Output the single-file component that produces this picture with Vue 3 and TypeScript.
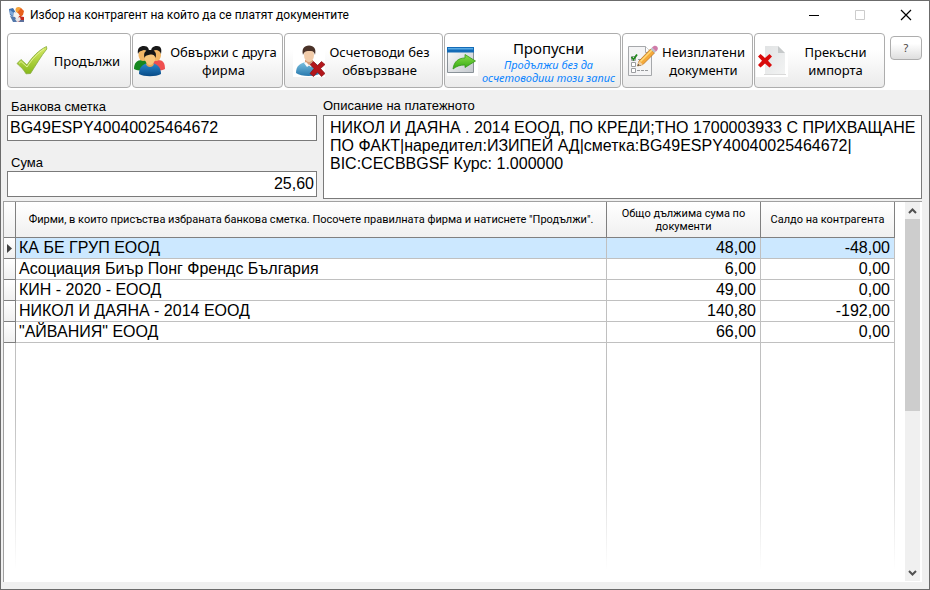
<script setup lang="ts">
import { ref } from 'vue'

interface Firm {
  name: string
  due: string
  balance: string
}

const account = ref('BG49ESPY40040025464672')
const amount = ref('25,60')
const description = ref(
  'НИКОЛ И ДАЯНА . 2014 ЕООД, ПО КРЕДИ;ТНО 1700003933 С ПРИХВАЩАНЕ ПО ФАКТ|наредител:ИЗИПЕЙ АД|сметка:BG49ESPY40040025464672|\nBIC:CECBBGSF Курс: 1.000000',
)
const selected = ref(0)

const firms: Firm[] = [
  { name: 'КА БЕ ГРУП ЕООД', due: '48,00', balance: '-48,00' },
  { name: 'Асоциация Биър Понг Френдс България', due: '6,00', balance: '0,00' },
  { name: 'КИН - 2020 - ЕООД', due: '49,00', balance: '0,00' },
  { name: 'НИКОЛ И ДАЯНА - 2014 ЕООД', due: '140,80', balance: '-192,00' },
  { name: '"АЙВАНИЯ" ЕООД', due: '66,00', balance: '0,00' },
]
</script>

<template>
  <main class="window">
    <header class="titlebar">
      <svg class="app-icon" viewBox="0 0 16 16" aria-hidden="true">
        <path d="M0 2 4 1l3 5-1 5-5-3z" fill="#3d6fae" />
        <path d="M1 3l4 3-1 3-3-2z" fill="#7da7d8" />
        <circle cx="9.500" cy="3" r="3" fill="#f4a23a" />
        <path d="M8 6 12 1l3 3-1 4-4 3z" fill="#e8601c" />
        <path d="M5 5l4 1 2 3-3 4-4-3z" fill="#f5f1ee" />
        <path d="M1 9l5 1 3 5H4z" fill="#5378ab" />
        <path d="M10 9l5 1v5H8z" fill="#c5281f" />
        <path d="M6 12l5-2 1 4-4 1z" fill="#e7e3e5" />
        <path d="M11 13h4v2h-5z" fill="#5d6f9b" />
      </svg>
      <h1 class="title">Избор на контрагент на който да се платят документите</h1>
      <div class="caption-buttons">
        <button class="caption" type="button" aria-label="Минимизирай">
          <svg viewBox="0 0 12 12"><path d="M1 6.500h10" stroke="#000" /></svg>
        </button>
        <button class="caption" type="button" aria-label="Максимизирай" disabled>
          <svg viewBox="0 0 12 12"><path d="M1.500 1.500h9v9h-9z" fill="none" stroke="#ccc" /></svg>
        </button>
        <button class="caption" type="button" aria-label="Затвори">
          <svg viewBox="0 0 12 12"><path d="M1 1l10 10M11 1 1 11" stroke="#000" stroke-width="1.200" /></svg>
        </button>
      </div>
    </header>

    <nav class="toolbar">
      <button class="tool tool-continue" type="button">
        <svg class="tool-icon" viewBox="0 0 32 32" aria-hidden="true">
          <defs>
            <linearGradient id="tick" x1="0" y1="0" x2="0" y2="1">
              <stop offset="0" stop-color="#d9ec66" />
              <stop offset="1" stop-color="#86b81a" />
            </linearGradient>
          </defs>
          <path d="M1 18.500 5 14.500l6 5.500C16 12 23 5 30.500 1.500l.3 2.500C25 11 20 20 14.500 28.500l-4.500.3C8 25 5 22 1 18.500z" fill="url(#tick)" stroke="#86a93c" stroke-width=".8" stroke-linejoin="round" />
          <path d="M3 18.400 5 16.500l6 5.500C16 14 22 8 28 4" fill="none" stroke="#e7f4a0" stroke-width=".9" />
        </svg>
        <span class="tool-text">Продължи</span>
      </button>

      <button class="tool tool-link" type="button">
        <svg class="tool-icon" viewBox="0 0 32 32" aria-hidden="true">
          <defs>
            <linearGradient id="blue-body" x1="0" y1="0" x2="0" y2="1">
              <stop offset="0" stop-color="#2a8ad0" />
              <stop offset="1" stop-color="#084a86" />
            </linearGradient>
          </defs>
          <path d="M0 24c0-6 3-9 8-9s8 3 8 9c-4 2-12 2-16 0z" fill="#16871f" />
          <path d="M16 24c0-6 3-9 8-9s7 3 7 9c-4 2-11 2-15 0z" fill="#ef4f4f" />
          <ellipse cx="9" cy="10" rx="4.500" ry="6" fill="#f3b765" />
          <ellipse cx="22.500" cy="10" rx="4.500" ry="6" fill="#f3b765" />
          <path d="M4 9C3 3 6 1 10 1s6 3 4.500 8C14 7 12 5 10 5 7 6 5 6 4 9z" fill="#191919" />
          <path d="M17.500 9C16 3 19 1 23 1s5 3 4 8c-1-3-3-4-5-4s-4 2-4.500 4z" fill="#191919" />
          <path d="M5 29c0-7 4-11 11-11s11 4 11 11c-5 3-17 3-22 0z" fill="url(#blue-body)" />
          <path d="M12 19c1 4 7 4 8 0l-2-2h-4z" fill="#e9a655" />
          <ellipse cx="16" cy="13.500" rx="5" ry="6.500" fill="#f9c77c" />
          <path d="M10.500 13C9 7 12 5 16.500 5S23 8 21.500 13c-.5-3-3-4-5-3.500-3 1-5 .5-6 3.500z" fill="#151515" />
        </svg>
        <span class="tool-text">Обвържи с друга фирма</span>
      </button>

      <button class="tool tool-account" type="button">
        <svg class="tool-icon" viewBox="0 0 32 32" aria-hidden="true">
          <defs>
            <linearGradient id="shirt" x1="0" y1="0" x2="0" y2="1">
              <stop offset="0" stop-color="#7cc1df" />
              <stop offset="1" stop-color="#2879ae" />
            </linearGradient>
          </defs>
          <path d="M0 2h32v30H0z" fill="#fff" />
          <path d="M3 28c0-7 4-11 13-11 8 0 12 4 12 11-5 4-20 4-25 0z" fill="url(#shirt)" />
          <path d="M12 15h8v3c-1 4-7 4-8 0z" fill="#d99c74" />
          <path d="M11 18l2-1 3 3 3-3 2 1-3 4-2-1.500-2 1.500z" fill="#f7fbfd" />
          <ellipse cx="16" cy="10" rx="5" ry="7" fill="#f1cba9" />
          <path d="M10 10C8.500 4 11 .5 16 .5s7.500 3.500 6 9.500C21.500 8 20.500 6 18 6c-3 0-6.500-1-8 4z" fill="#4a3228" />
          <path d="M17 19.500 20.500 16.500l4 4L28.500 16.500l3.500 3-4.500 4 4.500 5-3.500 3-4-4.500-4 4.500L17 28.500l4-5z" fill="#b3161b" stroke="#851114" stroke-width=".7" />
        </svg>
        <span class="tool-text">Осчетоводи без обвързване</span>
      </button>

      <button class="tool tool-skip" type="button">
        <svg class="tool-icon" viewBox="0 0 32 32" aria-hidden="true">
          <defs>
            <linearGradient id="pane" x1="0" y1="0" x2="1" y2="1">
              <stop offset="0" stop-color="#fdfdfd" />
              <stop offset="1" stop-color="#c4c9ce" />
            </linearGradient>
            <linearGradient id="go" x1="0" y1="0" x2="0" y2="1">
              <stop offset="0" stop-color="#8be04a" />
              <stop offset="1" stop-color="#32a811" />
            </linearGradient>
          </defs>
          <path d="M1 2h31v29H1z" fill="#fff" />
          <path d="M1.500 2.500h26v25h-26z" fill="url(#pane)" stroke="#8a9298" />
          <path d="M1 2h27v5.500H1z" fill="#136bb7" />
          <path d="M2 3h25v1.500H2z" fill="#59abe4" />
          <path d="M7 24c1-8 6-11 12-11V9.500l10.500 6.500L19 22.500V20c-5 0-8 1-12 4z" fill="url(#go)" stroke="#36981c" stroke-width=".8" stroke-linejoin="round" />
        </svg>
        <span class="tool-text">
          <span class="skip-title">Пропусни</span>
          <em class="skip-note">Продължи без да осчетоводиш този запис</em>
        </span>
      </button>

      <button class="tool tool-unpaid" type="button">
        <svg class="tool-icon" viewBox="0 0 32 32" aria-hidden="true">
          <path d="M1.500 1.500h17l6 6v23h-23z" fill="#f4f4f5" stroke="#a6a8ab" />
          <path d="M18.500 1.500v6h6" fill="#fff" stroke="#a6a8ab" />
          <path d="M4.500 11.500h4v4h-4zM4.500 17.500h4v4h-4zM4.500 23.500h4v4h-4z" fill="#fff" stroke="#9b9da0" />
          <path d="M4.500 12 6.500 14.500 10 9.500" fill="none" stroke="#22891e" stroke-width="1.800" />
          <path d="M11 14.500h6M11 20.500h4M10 25.500h11" stroke="#96989b" stroke-dasharray="3 1" />
          <path d="M10.500 21 12 16 23.500 4l4 4L16 19.500z" fill="#f5a93a" stroke="#b46a18" stroke-width=".7" />
          <path d="M13.500 16.500 25 5" stroke="#ffdb7b" stroke-width="1.400" />
          <path d="M10.500 21l1.500-5 4 3.500z" fill="#efd0a5" />
          <path d="M10.500 21l.7-2 1.500 1.200z" fill="#333" />
          <path d="M23.500 4l1.500-1.500 4 4L27.500 8z" fill="#b9bfc7" />
          <path d="M25 2.500C27 0 29 .5 30 1.500S31.500 4.500 29 6.500z" fill="#cf7ba8" />
        </svg>
        <span class="tool-text">Неизплатени документи</span>
      </button>

      <button class="tool tool-abort" type="button">
        <svg class="tool-icon" viewBox="0 0 32 32" aria-hidden="true">
          <defs>
            <linearGradient id="sheet" x1="0" y1="0" x2="1" y2="1">
              <stop offset="0" stop-color="#e1e3e4" />
              <stop offset="1" stop-color="#f2f3f3" />
            </linearGradient>
          </defs>
          <path d="M0 2h32v30H0z" fill="#fff" />
          <path d="M8 29h22v1H8z" fill="#d9d9d9" />
          <path d="M9 1h13l7 7v21H9z" fill="url(#sheet)" />
          <path d="M22 1v7h7z" fill="#c6c9ca" />
          <path d="M2 11.500 4.500 9 9 13l4.500-4 2.500 2.500-4 4.200 4 4.300-2.500 2.500L9 18.500l-4.500 4L2 20l4-4.300z" fill="#d90b0b" />
        </svg>
        <span class="tool-text">Прекъсни импорта</span>
      </button>

      <button class="help" type="button">?</button>
    </nav>

    <form class="form" @submit.prevent>
      <div class="form-left">
        <label class="label" for="account">Банкова сметка</label>
        <input id="account" v-model="account" class="field" type="text" />
        <label class="label label-sum" for="amount">Сума</label>
        <input id="amount" v-model="amount" class="field field-right" type="text" />
      </div>
      <div class="form-right">
        <label class="label" for="description">Описание на платежното</label>
        <textarea id="description" v-model="description" class="memo" spellcheck="false"></textarea>
      </div>
    </form>

    <section class="grid">
      <table class="table">
        <colgroup>
          <col class="col-mark" />
          <col />
          <col class="col-due" />
          <col class="col-balance" />
        </colgroup>
        <thead>
          <tr>
            <th></th>
            <th>Фирми, в които присъства избраната банкова сметка. Посочете правилната фирма и натиснете "Продължи".</th>
            <th>Общо дължима сума по документи</th>
            <th>Салдо на контрагента</th>
          </tr>
        </thead>
        <tbody>
          <tr
            v-for="(firm, i) in firms"
            :key="firm.name"
            class="row"
            :class="{ selected: i === selected }"
            @click="selected = i"
          >
            <td class="mark">
              <svg v-if="i === selected" class="pointer" viewBox="0 0 5 9" aria-hidden="true">
                <path d="M0 0l5 4.500L0 9z" fill="#404040" />
              </svg>
            </td>
            <td>{{ firm.name }}</td>
            <td class="num">{{ firm.due }}</td>
            <td class="num">{{ firm.balance }}</td>
          </tr>
          <tr class="filler" aria-hidden="true">
            <td></td>
            <td></td>
            <td></td>
            <td></td>
          </tr>
        </tbody>
      </table>
      <div class="scrollbar">
        <button class="scroll-button" type="button" aria-label="Нагоре">
          <svg viewBox="0 0 9 6"><path d="M1 5l3.500-3.500L8 5" fill="none" stroke="#505050" stroke-width="2" /></svg>
        </button>
        <div class="track"><div class="thumb"></div></div>
        <button class="scroll-button" type="button" aria-label="Надолу">
          <svg viewBox="0 0 9 6"><path d="M1 1l3.500 3.500L8 1" fill="none" stroke="#505050" stroke-width="2" /></svg>
        </button>
      </div>
    </section>
  </main>
</template>

<style>
body {
  margin: 0;
}
</style>

<style scoped>
.window {
  box-sizing: border-box;
  display: flex;
  flex-direction: column;
  min-height: 100vh;
  border: 1px solid #6b6b6b;
  background: #f0f0f0;
  color: #000;
  font-family: "Liberation Sans", Arial, sans-serif;
}

button {
  box-sizing: border-box;
  margin: 0;
  padding: 0;
  color: #000;
  font-family: "Noto Sans", "Segoe UI", sans-serif;
}

.titlebar {
  display: flex;
  align-items: center;
  height: 28px;
  padding-left: 8px;
  background: #fff;
}

.app-icon {
  width: 16px;
  height: 16px;
  flex: none;
}

.title {
  flex: 1;
  margin: 0 0 0 5px;
  font: 400 12px/16px Roboto, "Segoe UI", sans-serif;
}

.caption-buttons {
  display: flex;
}

.caption {
  display: flex;
  align-items: center;
  justify-content: center;
  width: 46px;
  height: 28px;
  border: 0;
  background: none;
}

.caption svg {
  width: 12px;
  height: 12px;
}

.toolbar {
  display: flex;
  gap: 1px;
  padding: 4px 6px 2px;
  background: #fff;
}

.tool {
  display: flex;
  align-items: center;
  height: 55px;
  border: 1px solid #adadad;
  border-radius: 4px;
  background: linear-gradient(#fff 30%, #ebebeb);
  font-size: 13px;
  line-height: 18px;
}

.tool-icon {
  flex: none;
  width: 32px;
  height: 32px;
}

.tool-text {
  flex: 1;
  min-width: 0;
  text-align: center;
}

.tool-continue {
  width: 124px;
  padding: 0 4px 0 8px;
}

.tool-link {
  width: 151px;
  padding: 0 1px;
}

.tool-account {
  width: 159px;
  padding: 0 8px;
}

.tool-skip {
  width: 177px;
  padding: 0 1px;
}

.tool-unpaid {
  width: 131px;
  padding: 0 4px;
}

.tool-abort {
  width: 131px;
  padding: 0 1px;
}

.skip-title {
  display: block;
  font-size: 15px;
  line-height: 20px;
}

.skip-note {
  display: block;
  color: #0a84ff;
  font-size: 11px;
  line-height: 13px;
}

.help {
  width: 32px;
  height: 24px;
  margin: 3px 0 0 4px;
  border: 1px solid #adadad;
  border-radius: 4px;
  background: linear-gradient(#fff 30%, #dedede);
  color: #4a4440;
  font-size: 11px;
  line-height: 20px;
}

.form {
  display: flex;
  gap: 6px;
  padding: 8px 7px 2px 6px;
}

.form-left {
  display: flex;
  flex: 310 1 0;
  flex-direction: column;
  padding-bottom: 2px;
}

.form-right {
  display: flex;
  flex: 599 1 0;
  flex-direction: column;
}

.label {
  height: 17px;
  padding-left: 4px;
  font-size: 13px;
  line-height: 18px;
}

.form-right .label {
  padding-left: 0;
  line-height: 16px;
}

.label-sum {
  height: 18px;
  margin-top: 12px;
  line-height: 20px;
}

.field,
.memo {
  box-sizing: border-box;
  width: 100%;
  margin: 0;
  border: 1px solid #7a7a7a;
  border-radius: 0;
  background: #fff;
  color: #000;
  font: 16px/18px "Liberation Sans", Arial, sans-serif;
}

.field {
  height: 26px;
  padding: 0 2px;
}

.field-right {
  text-align: right;
}

.memo {
  flex: 1;
  padding: 3px 0 3px 6px;
  resize: none;
  overflow: hidden;
}

.grid {
  display: flex;
  flex: 1;
  margin: 0 7px 7px 2px;
  border-top: 1px solid #a0a0a0;
  border-left: 1px solid #a0a0a0;
  background: #fff;
}

.table {
  flex: 1;
  border-collapse: separate;
  border-spacing: 0;
  table-layout: fixed;
}

.col-mark {
  width: 12px;
}

.col-due {
  width: 154px;
}

.col-balance {
  width: 134px;
}

th {
  box-sizing: border-box;
  height: 36px;
  padding: 0 8px;
  border-right: 1px solid #808080;
  border-bottom: 1px solid #808080;
  background: linear-gradient(#fff, #f0f0f0);
  font: 400 11px/13px Roboto, Tahoma, sans-serif;
  text-align: center;
}

th:first-child {
  padding: 0;
}

td {
  box-sizing: border-box;
  padding: 0 4px 0 3px;
  border-right: 1px solid #c0c0c0;
  border-bottom: 1px solid #c0c0c0;
  font-size: 16px;
  line-height: 20px;
  white-space: nowrap;
}

.row td {
  height: 21px;
}

.selected td {
  background: #cce8ff;
}

.row .mark {
  padding: 0 3px;
  border-color: #808080;
  background: linear-gradient(#fff, #f0f0f0);
}

.pointer {
  display: block;
  width: 5px;
  height: 9px;
}

.num {
  text-align: right;
}

.filler td {
  border: 0;
  background: linear-gradient(#c0c0c0 30%, #fff 95%) right / 1px 100% no-repeat;
}

.scrollbar {
  display: flex;
  flex-direction: column;
  width: 15px;
  margin: 0 2px 1px 10px;
  background: #f0f0f0;
}

.scroll-button {
  display: flex;
  align-items: center;
  justify-content: center;
  height: 17px;
  border: 0;
  background: none;
}

.scroll-button svg {
  width: 9px;
  height: 6px;
}

.track {
  flex: 1;
}

.thumb {
  height: calc(100% * 5 / 9);
  background: #cdcdcd;
}
</style>
